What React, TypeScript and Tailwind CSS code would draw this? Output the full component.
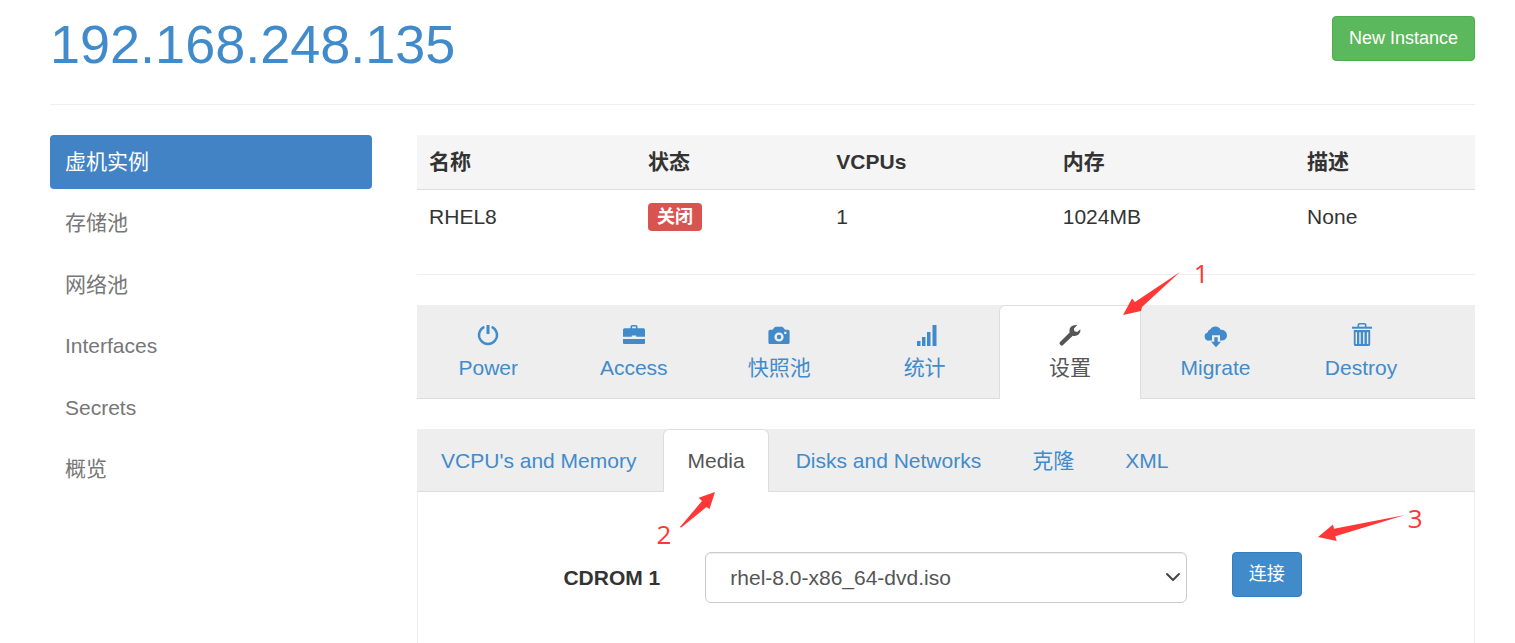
import { ChevronDown } from "lucide-react";
import type { ReactNode } from "react";

const sidebarItems = ["虚机实例", "存储池", "网络池", "Interfaces", "Secrets", "概览"];

const columns = [
  { label: "名称", width: "w-[20.7%]" },
  { label: "状态", width: "w-[17.8%]" },
  { label: "VCPUs", width: "w-[21.4%]" },
  { label: "内存", width: "w-[23.1%]" },
  { label: "描述", width: "w-[17%]" },
];

const actions = [
  { id: "power", label: "Power", icon: <PowerIcon /> },
  { id: "access", label: "Access", icon: <BriefcaseIcon /> },
  { id: "snapshots", label: "快照池", icon: <CameraIcon /> },
  { id: "graphs", label: "统计", icon: <SignalIcon /> },
  { id: "settings", label: "设置", icon: <WrenchIcon /> },
  { id: "migrate", label: "Migrate", icon: <CloudDownloadIcon /> },
  { id: "destroy", label: "Destroy", icon: <TrashIcon /> },
];

const settingTabs = ["VCPU's and Memory", "Media", "Disks and Networks", "克隆", "XML"];

function Icon({ children }: { children: ReactNode }) {
  return (
    <svg
      viewBox="0 0 24 24"
      fill="currentColor"
      className="h-6 w-6 overflow-visible"
      aria-hidden="true"
    >
      {children}
    </svg>
  );
}

function PowerIcon() {
  return (
    <Icon>
      <path
        d="M8.3 4.8A9 9 0 1 0 15.7 4.8"
        fill="none"
        stroke="currentColor"
        strokeWidth="2.4"
      />
      <rect x="10.5" y="3" width="3" height="9" />
    </Icon>
  );
}

function BriefcaseIcon() {
  return (
    <Icon>
      <path
        d="M9.3 7V4.8Q9.3 3.8 10.3 3.8H13.7Q14.7 3.8 14.7 4.8V7"
        fill="none"
        stroke="currentColor"
        strokeWidth="1.6"
      />
      <path d="M2.5 6.3H21.5Q23 6.3 23 7.8V14.8H14.2V13.4H9.8V14.8H1V7.8Q1 6.3 2.5 6.3Z" />
      <path d="M1 17H23V21Q23 22 22 22H2Q1 22 1 21Z" />
    </Icon>
  );
}

function CameraIcon() {
  return (
    <Icon>
      <path
        fillRule="evenodd"
        d="M3 7.8H5.5L7.6 5.2Q8 4.7 8.7 4.7H14.8Q15.5 4.7 16 5.2L18.2 7.8H21Q22.6 7.8 22.6 9.4V20.4Q22.6 22 21 22H3Q1.4 22 1.4 20.4V9.4Q1.4 7.8 3 7.8ZM12 10.4A4.6 4.6 0 1 0 12 19.6A4.6 4.6 0 1 0 12 10.4ZM17.2 9.8V12H19.4V9.8Z"
      />
      <circle cx="12" cy="15" r="2.2" />
    </Icon>
  );
}

function SignalIcon() {
  return (
    <Icon>
      <rect x="4" y="19" width="3.5" height="5" />
      <rect x="9" y="15" width="3.5" height="9" />
      <rect x="14" y="10" width="3.5" height="14" />
      <rect x="19.5" y="3" width="4" height="21" />
    </Icon>
  );
}

function WrenchIcon() {
  return (
    <Icon>
      <path d="M1.8 20.2L11.6 10.6Q10.9 6.6 13.2 4.6Q15.6 2.4 19.2 3.2L15.9 6.5L16.4 9.3L19.2 9.9L22.4 7.2Q23 10.4 20.6 12.6Q18.2 14.6 14.8 13.8L4.8 23.3Q3.6 24.2 2.4 23Q0.9 21.6 1.8 20.2Z" />
    </Icon>
  );
}

function CloudDownloadIcon() {
  return (
    <Icon>
      <path d="M8 18.6H5.2A4.2 4.2 0 0 1 3.6 10.4A3.4 3.4 0 0 1 6.2 7.6A6 6 0 0 1 16.8 7.9A5.3 5.3 0 0 1 18.4 18.6H16V13.2H8Z" />
      <path d="M10.3 15.2H13.7V19.8H17L12 25.3L7 19.8H10.3Z" />
    </Icon>
  );
}

function TrashIcon() {
  return (
    <Icon>
      <path
        d="M9.3 5V3Q9.3 1.8 10.5 1.8H15.5Q16.7 1.8 16.7 3V5"
        fill="none"
        stroke="currentColor"
        strokeWidth="1.6"
      />
      <rect x="3" y="4.7" width="20" height="2" />
      <path
        fillRule="evenodd"
        d="M4.8 8H21.2V22.6Q21.2 24 19.8 24H6.2Q4.8 24 4.8 22.6ZM6.6 10.2V22H8V10.2ZM10.3 10.2V22H11.7V10.2ZM14.1 10.2V22H15.5V10.2ZM17.9 10.2V22H19.3V10.2Z"
      />
    </Icon>
  );
}

function StepNumber({ children }: { children: ReactNode }) {
  return (
    <span className="block font-['Open_Sans',sans-serif] text-[26px] leading-8">
      {children}
    </span>
  );
}

function StepOne() {
  return (
    <div className="pointer-events-none absolute -top-12 left-[123px] z-10 flex gap-3 text-[#ff3737]">
      <svg viewBox="0 0 60 46" className="mt-3 h-[46px] w-[60px]" fill="currentColor">
        <path d="M1 46L10 29.5L13 33L58 3L20 38L19 42Z" />
      </svg>
      <StepNumber>1</StepNumber>
    </div>
  );
}

function StepTwo() {
  return (
    <div className="pointer-events-none absolute -left-[7px] top-[61px] z-10 flex w-15 items-end justify-between text-[#ff3737]">
      <span className="-mb-5">
        <StepNumber>2</StepNumber>
      </span>
      <svg viewBox="0 0 38 40" className="h-10 w-[38px]" fill="currentColor">
        <path d="M37 2L20.7 7.7L24 11L2 37L3 37.8L28.5 17L31.5 19Z" />
      </svg>
    </div>
  );
}

function StepThree() {
  return (
    <div className="pointer-events-none absolute -top-[50px] left-[84px] z-10 flex items-start gap-[2px] text-[#ff3737]">
      <svg viewBox="0 0 90 30" className="mt-[11px] h-[30px] w-[90px]" fill="currentColor">
        <path d="M2 24L17 11.5L18 15.8L89 2L19.3 23.3L20.7 28Z" />
      </svg>
      <StepNumber>3</StepNumber>
    </div>
  );
}

export default function App() {
  return (
    <div className="flex min-h-screen flex-col bg-white pl-[50px] pr-10 font-['Liberation_Sans','Noto_Sans_CJK_SC',sans-serif] text-[21px] leading-[30px] text-[#333]">
      <header className="mb-[30px] flex items-start justify-between border-b border-[#eee] pb-8 pt-4">
        <h1 className="text-[54px] leading-[56px] text-[#428bca]">
          <a href="#host">192.168.248.135</a>
        </h1>
        <button
          type="button"
          className="h-[45px] rounded-[4px] border border-[#4cae4c] bg-[#5cb85c] px-4 pb-0.5 text-lg leading-none text-white"
        >
          New Instance
        </button>
      </header>

      <div className="flex flex-1 gap-[45px]">
        <nav className="w-[22.6%] shrink-0">
          <ul className="flex h-[361px] flex-col justify-between">
            {sidebarItems.map((item, index) => (
              <li key={item}>
                <a
                  href="#menu"
                  className={
                    index === 0
                      ? "block rounded-[4px] bg-[#4283c6] px-[15px] py-3 text-white"
                      : "block px-[15px] py-3 text-[#777]"
                  }
                >
                  {item}
                </a>
              </li>
            ))}
          </ul>
        </nav>

        <main className="flex min-w-0 flex-1 flex-col">
          <table className="w-full table-fixed text-left">
            <thead>
              <tr className="border-b border-[#ddd] bg-[#f5f5f5]">
                {columns.map((column) => (
                  <th key={column.label} className={`${column.width} px-3 py-3 font-bold`}>
                    {column.label}
                  </th>
                ))}
              </tr>
            </thead>
            <tbody>
              <tr>
                <td className="px-3 py-3">RHEL8</td>
                <td className="px-3 py-3">
                  <span className="block w-fit rounded-[4px] bg-[#d9534f] px-[9px] text-lg font-bold leading-7 text-white">
                    关闭
                  </span>
                </td>
                <td className="px-3 py-3">1</td>
                <td className="px-3 py-3">1024MB</td>
                <td className="px-3 py-3">None</td>
              </tr>
            </tbody>
          </table>

          <hr className="my-[30px] border-[#eee]" />

          <ul className="flex border-b border-[#ddd] bg-[#eee]">
            {actions.map((action) => (
              <li key={action.id} className="relative -mb-px w-[13.75%] pr-[3px]">
                <a
                  href={`#${action.id}`}
                  className={
                    action.id === "settings"
                      ? "flex flex-col items-center rounded-t-[6px] border border-b-0 border-[#ddd] bg-white pb-4 pt-4 text-[#555]"
                      : "flex flex-col items-center border border-b-0 border-transparent pb-4 pt-4 text-[#428bca]"
                  }
                >
                  {action.icon}
                  <span className="mt-[7px]">{action.label}</span>
                </a>
                {action.id === "settings" && <StepOne />}
              </li>
            ))}
          </ul>

          <ul className="mt-[30px] flex border-b border-[#ddd] bg-[#eee]">
            {settingTabs.map((tab) => (
              <li key={tab} className="relative -mb-px mr-[3px]">
                <a
                  href="#tab"
                  className={
                    tab === "Media"
                      ? "block rounded-t-[6px] border border-b-0 border-[#ddd] bg-white px-[23px] py-4 text-[#555]"
                      : "block border border-b-0 border-transparent px-[23px] py-4 text-[#428bca]"
                  }
                >
                  {tab}
                </a>
                {tab === "Media" && <StepTwo />}
              </li>
            ))}
          </ul>

          <form className="grid flex-1 grid-cols-4 items-start gap-[45px] border-x border-[#eee] px-6 pb-10 pt-15">
            <label htmlFor="cdrom" className="pt-[11px] text-right font-bold">
              CDROM 1
            </label>
            <div className="relative col-span-2">
              <select
                id="cdrom"
                defaultValue="rhel8"
                className="h-[51px] w-full appearance-none rounded-[6px] border border-[#ccc] bg-white px-6 text-[#555] shadow-[inset_0_1px_1px_rgba(0,0,0,0.075)]"
              >
                <option value="rhel8">rhel-8.0-x86_64-dvd.iso</option>
              </select>
              <ChevronDown
                className="pointer-events-none absolute right-0.5 top-[13px] h-6 w-6 text-[#444]"
                strokeWidth={2}
              />
            </div>
            <div className="relative">
              <button
                type="button"
                className="h-[45px] rounded-[4px] border border-[#357ebd] bg-[#428bca] px-4 pb-0.5 text-lg leading-none text-white"
              >
                连接
              </button>
              <StepThree />
            </div>
          </form>
        </main>
      </div>
    </div>
  );
}
